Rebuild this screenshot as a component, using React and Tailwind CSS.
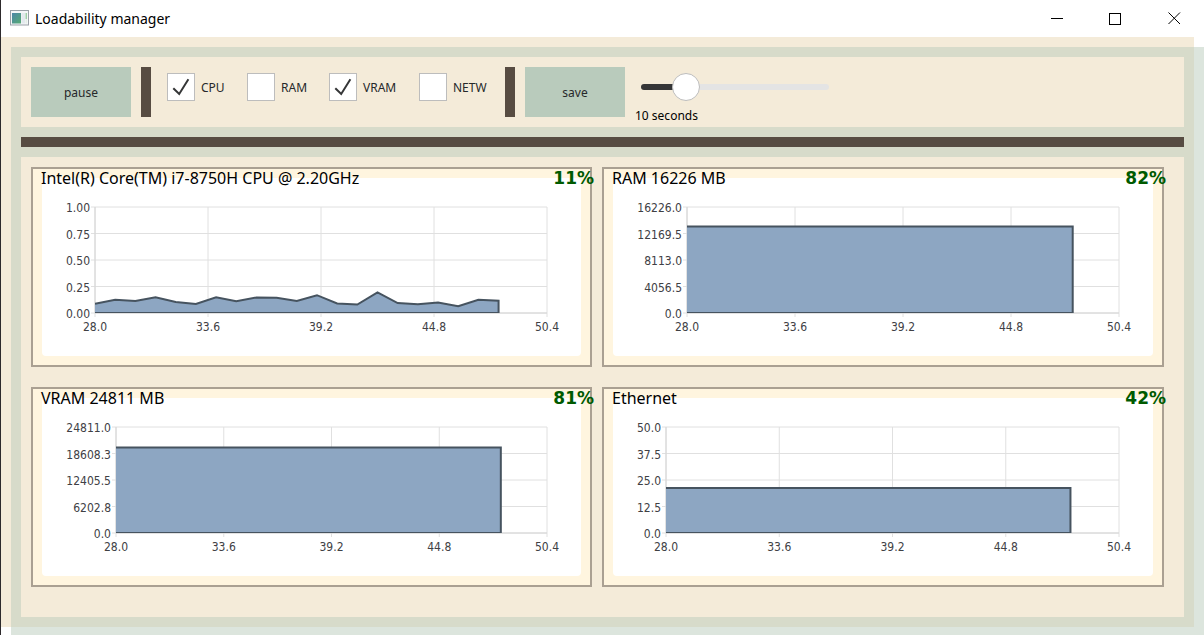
import { useId, useLayoutEffect, useRef, useState } from "react";

const X_MIN = 28;
const X_MAX = 50.4;
const X_TICKS = [28, 33.6, 39.2, 44.8, 50.4];
const CHART_HEIGHT = 178;
const PLOT_TOP = 29;
const PLOT_BOTTOM = 135;
const PLOT_MARGIN_RIGHT = 34;

const CPU = [
  0.088, 0.125, 0.113, 0.148, 0.104, 0.085, 0.148, 0.11, 0.146, 0.143, 0.113,
  0.168, 0.09, 0.08, 0.195, 0.094, 0.082, 0.1, 0.063, 0.125, 0.116,
];
const flat = (value) => Array.from({ length: 21 }, () => value);

const MONITORS = [
  {
    title: "Intel(R) Core(TM) i7-8750H CPU @ 2.20GHz",
    percent: "11%",
    max: 1,
    labels: ["0.00", "0.25", "0.50", "0.75", "1.00"],
    left: 53,
    values: CPU,
  },
  {
    title: "RAM 16226 MB",
    percent: "82%",
    max: 16226,
    labels: ["0.0", "4056.5", "8113.0", "12169.5", "16226.0"],
    left: 74,
    values: flat(13260),
  },
  {
    title: "VRAM 24811 MB",
    percent: "81%",
    max: 24811,
    labels: ["0.0", "6202.8", "12405.5", "18608.3", "24811.0"],
    left: 74,
    values: flat(20000),
  },
  {
    title: "Ethernet",
    percent: "42%",
    max: 50,
    labels: ["0.0", "12.5", "25.0", "37.5", "50.0"],
    left: 53,
    values: flat(21.2),
  },
];

function AreaChart({ title, max, labels, left, values }) {
  const box = useRef(null);
  const clip = useId();
  const [width, setWidth] = useState(540);

  useLayoutEffect(() => {
    const measure = () => setWidth(Math.round(box.current.clientWidth));
    measure();
    const observer = new ResizeObserver(measure);
    observer.observe(box.current);
    return () => observer.disconnect();
  }, []);

  const right = width - PLOT_MARGIN_RIGHT;
  const x = (v) => left + ((v - X_MIN) / (X_MAX - X_MIN)) * (right - left);
  const y = (v) => PLOT_BOTTOM - (v / max) * (PLOT_BOTTOM - PLOT_TOP);
  const top = values.map((v, i) => `${x(X_MIN + i)},${y(v)}`).join(" ");
  const end = x(X_MIN + values.length - 1);

  return (
    <div ref={box} className="overflow-hidden rounded-[4px] bg-white">
      <svg
        role="img"
        aria-label={title}
        width={width}
        height={CHART_HEIGHT}
        className="block font-['DejaVu_Sans_Condensed','DejaVu_Sans',sans-serif] text-[12px]"
      >
        <clipPath id={clip}>
          <rect x={left} y={PLOT_TOP} width={right - left} height={PLOT_BOTTOM - PLOT_TOP} />
        </clipPath>
        {labels.map((label, i) => {
          const ly = y((max * i) / 4);
          return (
            <g key={label}>
              <line x1={left - 4} x2={right} y1={ly} y2={ly} stroke="#e0e0e0" />
              <text x={left - 5} y={Math.ceil(ly) + 5} textAnchor="end" fill="#404044">
                {label}
              </text>
            </g>
          );
        })}
        {X_TICKS.map((tick) => (
          <g key={tick}>
            <line x1={x(tick)} x2={x(tick)} y1={PLOT_TOP} y2={PLOT_BOTTOM + 4} stroke="#e0e0e0" />
            <text x={x(tick)} y={PLOT_BOTTOM + 18} textAnchor="middle" fill="#404044">
              {tick.toFixed(1)}
            </text>
          </g>
        ))}
        <path d={`M${left} ${PLOT_TOP}V${PLOT_BOTTOM}H${right}`} fill="none" stroke="#d6d6d6" />
        <polygon
          clipPath={`url(#${clip})`}
          points={`${left},${PLOT_BOTTOM} ${top} ${end},${PLOT_BOTTOM}`}
          fill="#8da6c2"
        />
        <polyline
          clipPath={`url(#${clip})`}
          points={`${top} ${end},${PLOT_BOTTOM} ${left},${PLOT_BOTTOM}`}
          fill="none"
          stroke="#46535f"
          strokeWidth="2"
        />
      </svg>
    </div>
  );
}

function MonitorCard(props) {
  return (
    <section className="relative border-2 border-[#aaa092] bg-[#fff5df] p-[9px]">
      <AreaChart {...props} />
      <header className="absolute -right-1 left-2 -top-0.5 flex items-center justify-between leading-[22px]">
        <h2 className="text-[16px] text-black">{props.title}</h2>
        <span className="font-['DejaVu_Sans',sans-serif] text-[17px] font-bold text-[#005a00]">
          {props.percent}
        </span>
      </header>
    </section>
  );
}

function Check({ label, checked, onChange, className }) {
  return (
    <label className={`flex items-center gap-1.5 text-[#26282a] ${className}`}>
      <span className="grid size-7 shrink-0">
        <input
          type="checkbox"
          checked={checked}
          onChange={onChange}
          className="col-start-1 row-start-1 size-7 appearance-none border border-[#bdbdbd] bg-white"
        />
        {checked && (
          <svg
            viewBox="0 0 28 28"
            className="pointer-events-none col-start-1 row-start-1 size-7"
            fill="none"
            stroke="#353637"
            strokeWidth="2"
          >
            <path d="M6.3 15.2 L12.2 21 L21.4 6.3" />
          </svg>
        )}
      </span>
      <span className="pt-0.5">{label}</span>
    </label>
  );
}

function Separator() {
  return <div className="h-[50px] w-2.5 shrink-0 bg-[#574c42]" />;
}

function ActionButton({ children, onClick }) {
  return (
    <button
      type="button"
      onClick={onClick}
      className="h-[50px] w-[100px] shrink-0 bg-[#b9cbbc] pt-0.5 text-[#26282a]"
    >
      {children}
    </button>
  );
}

function TitleBar() {
  const button = "flex h-9 w-[59px] items-center justify-center";
  return (
    <header className="flex h-[37px] items-start bg-white">
      <div className="flex h-9 flex-1 items-center gap-1.5 pl-[9px]">
        <svg width="19" height="16" viewBox="0 0 19 16">
          <defs>
            <linearGradient id="screen" x1="0" y1="0" x2="1" y2="1">
              <stop offset="0" stopColor="#4c86a8" />
              <stop offset="1" stopColor="#56ab74" />
            </linearGradient>
          </defs>
          <rect x="0.5" y="0.5" width="18" height="14.5" fill="#f4f6f8" stroke="#9aa1a8" />
          <rect x="2" y="3" width="9" height="10.5" fill="url(#screen)" />
          <rect x="11.5" y="3" width="3.5" height="10.5" fill="#e3e9ee" />
          <rect x="15.5" y="3" width="1.5" height="6" fill="#9fd0a8" />
          <rect x="15.5" y="9" width="1.5" height="4.5" fill="#e3efe6" />
        </svg>
        <h1 className="text-[14px] text-black">Loadability manager</h1>
      </div>
      <button type="button" aria-label="Minimize" className={button}>
        <svg width="13" height="13" stroke="#000" fill="none">
          <path d="M1 6.5H13" />
        </svg>
      </button>
      <button type="button" aria-label="Maximize" className={button}>
        <svg width="13" height="13" stroke="#000" fill="none">
          <rect x="0.5" y="1.5" width="11" height="11" />
        </svg>
      </button>
      <button type="button" aria-label="Close" className={button}>
        <svg width="13" height="13" stroke="#000" fill="none">
          <path d="M0.5 0.5L12 12M12 0.5L0.5 12" />
        </svg>
      </button>
    </header>
  );
}

const SECONDS_MIN = 1;
const SECONDS_MAX = 48;

export default function App() {
  const [running, setRunning] = useState(true);
  const [seconds, setSeconds] = useState(10);
  const [shown, setShown] = useState({ CPU: true, RAM: false, VRAM: true, NETW: false });
  const toggle = (key) => () => setShown((s) => ({ ...s, [key]: !s[key] }));
  const filled = ((seconds - SECONDS_MIN) / (SECONDS_MAX - SECONDS_MIN)) * 100;

  return (
    <div className="flex min-h-screen flex-col border-l border-[#2d2a2c] bg-white font-['Noto_Sans',sans-serif] text-[12px]">
      <TitleBar />
      <div className="grid flex-1">
        <div className="col-start-1 row-start-1 mr-2.5 mb-2 bg-[#f4ebd9]" />
        <main className="z-10 col-start-1 row-start-1 mt-2.5 ml-2.5 flex flex-col gap-2.5 bg-[#b9cbbc]/50 pt-2.5 pr-5 pb-[18px] pl-2.5">
          <div className="flex h-[70px] items-start gap-2.5 bg-[#f4ebd9] p-2.5">
            <ActionButton onClick={() => setRunning(!running)}>
              {running ? "pause" : "resume"}
            </ActionButton>
            <Separator />
            <div className="flex py-1.5 pl-1.5">
              <Check className="w-20" label="CPU" checked={shown.CPU} onChange={toggle("CPU")} />
              <Check className="w-[82px]" label="RAM" checked={shown.RAM} onChange={toggle("RAM")} />
              <Check className="w-[90px]" label="VRAM" checked={shown.VRAM} onChange={toggle("VRAM")} />
              <Check className="w-[76px]" label="NETW" checked={shown.NETW} onChange={toggle("NETW")} />
            </div>
            <Separator />
            <ActionButton>save</ActionButton>
            <div className="flex flex-col">
              <div className="px-1.5 pt-1.5">
                <input
                  id="interval"
                  type="range"
                  min={SECONDS_MIN}
                  max={SECONDS_MAX}
                  value={seconds}
                  onChange={(e) => setSeconds(Number(e.target.value))}
                  style={{
                    "--track": `linear-gradient(to right, #353637 ${filled}%, #e4e4e4 ${filled}%)`,
                  }}
                  className="block h-7 w-[188px] appearance-none bg-transparent [&::-webkit-slider-runnable-track]:h-1.5 [&::-webkit-slider-runnable-track]:rounded-full [&::-webkit-slider-runnable-track]:[background:var(--track)] [&::-webkit-slider-thumb]:-mt-[11px] [&::-webkit-slider-thumb]:size-7 [&::-webkit-slider-thumb]:appearance-none [&::-webkit-slider-thumb]:rounded-full [&::-webkit-slider-thumb]:border [&::-webkit-slider-thumb]:border-[#bdbdbd] [&::-webkit-slider-thumb]:bg-white"
                />
              </div>
              <label htmlFor="interval" className="pt-[7px] leading-4 text-black">
                {seconds} seconds
              </label>
            </div>
          </div>
          <div className="h-2.5 bg-[#574c42]" />
          <div className="grid flex-1 grid-cols-[minmax(0,561fr)_minmax(0,562fr)] content-start gap-x-2.5 gap-y-5 bg-[#f4ebd9] pt-2.5 pr-5 pb-[30px] pl-2.5">
            {MONITORS.map((monitor) => (
              <MonitorCard key={monitor.title} {...monitor} />
            ))}
          </div>
        </main>
      </div>
    </div>
  );
}
